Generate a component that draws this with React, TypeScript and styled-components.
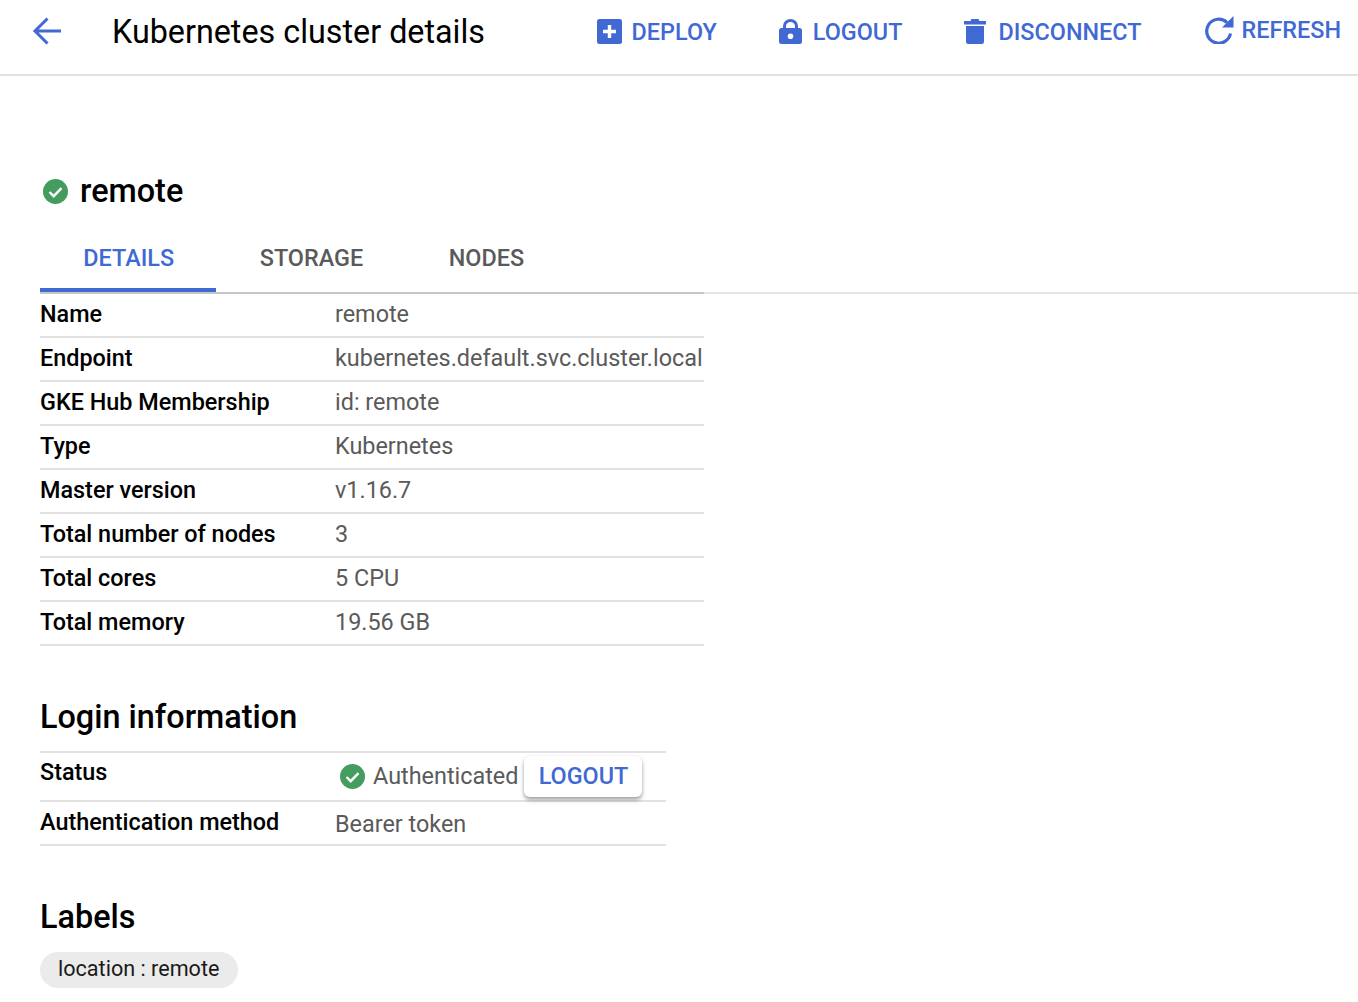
import React from 'react';
import styled, { createGlobalStyle } from 'styled-components';

const blue = '#4169d4';

const GlobalStyle = createGlobalStyle`
  html, body {
    margin: 0;
    padding: 0;
    background: #fff;
    font-family: Roboto, "Liberation Sans", sans-serif;
    overflow: hidden;
  }
`;

const Page = styled.div`
  width: 1358px;
  height: 1002px;
  overflow: hidden;
`;

const Toolbar = styled.header`
  height: 76px;
  box-sizing: border-box;
  border-bottom: 2px solid #e2e2e2;
  display: flex;
  align-items: center;
  padding: 0 17px 11px 30px;
`;

const BackButton = styled.button`
  border: 0;
  background: none;
  padding: 0;
  width: 34px;
  height: 34px;
  display: flex;
  cursor: pointer;
`;

const PageTitle = styled.h1`
  margin: 0 0 0 48px;
  font-size: 32.3px;
  line-height: 36px;
  font-weight: 400;
  color: #000;
  flex: 1;
`;

const Action = styled.button<{ $gap: number; $iconGap: number; $raised?: boolean }>`
  border: 0;
  background: none;
  padding: 0;
  margin-left: ${p => p.$gap}px;
  display: flex;
  align-items: center;
  gap: ${p => p.$iconGap}px;
  color: ${blue};
  font-family: inherit;
  font-size: 23.4px;
  line-height: 28px;
  font-weight: 500;
  cursor: pointer;
  transform: translateY(${p => (p.$raised ? -2 : 0)}px);
`;

const Content = styled.main`
  padding: 96px 0 0 40px;
`;

const ClusterHeading = styled.div`
  display: flex;
  align-items: center;
  gap: 12px;
  height: 38px;
  padding-left: 3px;
`;

const ClusterName = styled.h2`
  margin: 0;
  font-size: 32.4px;
  line-height: 38px;
  font-weight: 500;
  color: #000;
`;

const TabBar = styled.div`
  margin-top: 28px;
  height: 54px;
  border-bottom: 2px solid #e4e4e4;
`;

const TabList = styled.div`
  display: flex;
  width: 664px;
  height: 54px;
  border-bottom: 2px solid #c6c6c6;
`;

const Tab = styled.div<{ $active?: boolean }>`
  height: 54px;
  box-sizing: border-box;
  padding: 5px 42.300px 0 43.300px;
  font-size: 23.4px;
  line-height: 30px;
  font-weight: 500;
  color: ${p => (p.$active ? blue : '#5a5a5a')};
  border-bottom: ${p => (p.$active ? `4px solid ${blue}` : '0')};
`;

const InfoTable = styled.div<{ $width: number }>`
  width: ${p => p.$width}px;
`;

const Row = styled.div<{ $height?: number; $pad?: string }>`
  display: flex;
  align-items: center;
  height: ${p => p.$height ?? 44}px;
  box-sizing: border-box;
  border-bottom: 2px solid #e2e2e2;
  padding: ${p => p.$pad ?? '0 0 3px'};
`;

const RowLabel = styled.div<{ $lift?: number }>`
  width: 295px;
  flex: none;
  font-size: 23.4px;
  line-height: 28px;
  font-weight: 500;
  color: #000;
  margin-bottom: ${p => p.$lift ?? 0}px;
`;

const RowValue = styled.div`
  font-size: 23.4px;
  line-height: 28px;
  color: #5a5a5a;
  white-space: nowrap;
  display: flex;
  align-items: center;
`;

const SectionTitle = styled.h3<{ $top: number }>`
  margin: ${p => p.$top}px 0 0;
  font-size: 32.4px;
  line-height: 40px;
  font-weight: 500;
  color: #000;
`;

const LoginTable = styled(InfoTable)`
  margin-top: 14px;
  border-top: 2px solid #e2e2e2;
`;

const StatusIcon = styled.span`
  display: flex;
  margin: 0 8px 0 5px;
`;

const LogoutButton = styled.button`
  border: 0;
  background: #fff;
  margin-left: 6px;
  width: 118px;
  height: 41px;
  border-radius: 6px;
  box-shadow: 0 3px 4px rgba(0, 0, 0, 0.35), 0 0 3px rgba(0, 0, 0, 0.06);
  color: ${blue};
  font-family: inherit;
  font-size: 23.4px;
  font-weight: 500;
  padding: 0;
`;

const Chip = styled.div`
  display: inline-block;
  margin-top: 15px;
  height: 36px;
  line-height: 34px;
  padding: 0 19px 0 18px;
  border-radius: 18px;
  background: #ebebeb;
  color: #1a1a1a;
  font-size: 21.6px;
`;

const CheckCircle = () => (
  <svg width={25} height={25} viewBox="0 0 25 25">
    <circle cx="12.5" cy="12.5" r="12.5" fill="#459c5f" />
    <path d="M6.500 13l4.200 4.200 7.800-8" fill="none" stroke="#fff" strokeWidth="2.400" />
  </svg>
);

const details: [string, string][] = [
  ['Name', 'remote'],
  ['Endpoint', 'kubernetes.default.svc.cluster.local'],
  ['GKE Hub Membership', 'id: remote'],
  ['Type', 'Kubernetes'],
  ['Master version', 'v1.16.7'],
  ['Total number of nodes', '3'],
  ['Total cores', '5 CPU'],
  ['Total memory', '19.56 GB'],
];

const App: React.FC = () => (
  <Page>
    <GlobalStyle />
    <Toolbar>
      <BackButton aria-label="Back">
        <svg width="34" height="34" viewBox="0 0 34 34">
          <path d="M31 16H5M17.500 3.500L5 16l12.500 12.500" fill="none" stroke={blue} strokeWidth="3" />
        </svg>
      </BackButton>
      <PageTitle>Kubernetes cluster details</PageTitle>
      <Action $gap={0} $iconGap={10}>
        <svg width="25" height="25" viewBox="0 0 25 25">
          <rect width="25" height="25" rx="2.500" fill={blue} />
          <path d="M12.500 6v13M6 12.500h13" stroke="#fff" strokeWidth="3.400" />
        </svg>
        DEPLOY
      </Action>
      <Action $gap={62} $iconGap={11}>
        <svg width="23" height="25" viewBox="0 0 23 25">
          <path
            d="M4 9V7a7.500 7 0 0 1 15 0v2h1.500A2.500 2.500 0 0 1 23 11.500v11a2.500 2.500 0 0 1-2.500 2.500h-18A2.500 2.500 0 0 1 0 22.500v-11A2.500 2.500 0 0 1 2.500 9zm3 0h9V7a4.500 4 0 0 0-9 0zm4.500 5.500a2.800 2.800 0 1 0 0 5.600 2.800 2.800 0 0 0 0-5.600z"
            fill={blue}
            fillRule="evenodd"
          />
        </svg>
        LOGOUT
      </Action>
      <Action $gap={62} $iconGap={12}>
        <svg width="22" height="25" viewBox="0 0 22 25">
          <path d="M7.500 0h7l1 2H22v3.500H0V2h6.500zM2 7h18v15.500a2.500 2.500 0 0 1-2.500 2.500h-13A2.500 2.500 0 0 1 2 22.500z" fill={blue} />
        </svg>
        DISCONNECT
      </Action>
      <Action $gap={63} $iconGap={7} $raised>
        <svg width="30" height="28" viewBox="0 0 30 28">
          <path d="M23 6.500A12 12 0 1 0 26.500 17.500" fill="none" stroke={blue} strokeWidth="3.200" />
          <path d="M29.500 0v11.500H18z" fill={blue} />
        </svg>
        REFRESH
      </Action>
    </Toolbar>
    <Content>
      <ClusterHeading>
        <CheckCircle />
        <ClusterName>remote</ClusterName>
      </ClusterHeading>
      <TabBar>
        <TabList>
          <Tab $active>DETAILS</Tab>
          <Tab>STORAGE</Tab>
          <Tab>NODES</Tab>
        </TabList>
      </TabBar>
      <InfoTable $width={664}>
        {details.map(([label, value]) => (
          <Row key={label}>
            <RowLabel>{label}</RowLabel>
            <RowValue>{value}</RowValue>
          </Row>
        ))}
      </InfoTable>
      <SectionTitle $top={51}>Login information</SectionTitle>
      <LoginTable $width={626}>
        <Row $height={49} $pad="0 0 1px">
          <RowLabel $lift={9}>Status</RowLabel>
          <RowValue>
            <StatusIcon>
              <CheckCircle />
            </StatusIcon>
            Authenticated
            <LogoutButton>LOGOUT</LogoutButton>
          </RowValue>
        </Row>
        <Row $pad="1px 0 0">
          <RowLabel $lift={4}>Authentication method</RowLabel>
          <RowValue>Bearer token</RowValue>
        </Row>
      </LoginTable>
      <SectionTitle $top={51}>Labels</SectionTitle>
      <Chip>location : remote</Chip>
    </Content>
  </Page>
);

export default App;
